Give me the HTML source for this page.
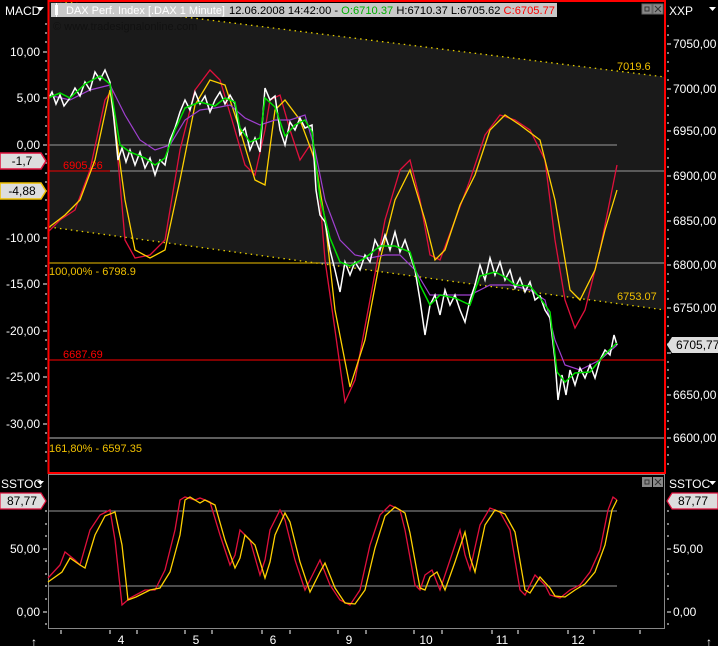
<!DOCTYPE html>
<html><head><meta charset="utf-8"><style>
html,body{margin:0;padding:0;background:#000;width:718px;height:646px;overflow:hidden}
svg{display:block;font-family:"Liberation Sans",sans-serif}
</style></head><body>
<svg width="718" height="646" viewBox="0 0 718 646" xmlns="http://www.w3.org/2000/svg">
<rect width="718" height="646" fill="#000"/>
<polygon points="49,0 665,77 665,310 49,227" fill="#1a1a1a"/>
<line x1="49" y1="0" x2="665" y2="77" stroke="#e8d000" stroke-width="1.3" stroke-dasharray="1.5,4"/>
<line x1="49" y1="227" x2="665" y2="310" stroke="#e8d000" stroke-width="1.3" stroke-dasharray="1.5,4"/>
<line x1="49" y1="145" x2="617" y2="145" stroke="#999" stroke-width="1"/>
<line x1="49" y1="171" x2="665" y2="171" stroke="#999" stroke-width="1"/>
<line x1="49" y1="171" x2="110" y2="171" stroke="#e00" stroke-width="1"/>
<line x1="49" y1="263" x2="665" y2="263" stroke="#aaa" stroke-width="1"/>
<line x1="49" y1="263" x2="320" y2="263" stroke="#f0c000" stroke-width="1"/>
<line x1="49" y1="360" x2="665" y2="360" stroke="#f00" stroke-width="1"/>
<line x1="49" y1="438" x2="665" y2="438" stroke="#bbb" stroke-width="1"/>
<g font-size="11">
<text x="63" y="169" fill="#f00">6905.26</text>
<text x="49" y="275" fill="#f0c000">100,00% - 6798.9</text>
<text x="63" y="358" fill="#f00">6687.69</text>
<text x="49" y="452" fill="#f0c000">161,80% - 6597.35</text>
<text x="617" y="70" fill="#f0c000">7019.6</text>
<text x="617" y="300" fill="#f0c000">6753.07</text>
<text x="53" y="30" fill="#111">© www.tradesignalonline.com</text>
</g>
<polyline fill="none" stroke="#e0103c" stroke-width="1.3" points="48,232 60,220 75,210 90,170 105,100 112,90 118,160 125,240 135,258 150,255 165,240 180,150 195,90 210,70 220,80 232,120 245,165 255,175 265,130 270,100 280,95 290,130 300,160 310,145 318,175 325,260 335,330 345,402 355,380 370,300 385,220 400,170 410,160 420,200 430,255 440,260 455,220 470,180 485,135 500,115 515,120 530,130 545,160 555,240 565,300 575,328 585,310 600,250 610,200 617,165"/>
<polyline fill="none" stroke="#ffd000" stroke-width="1.3" points="48,228 65,215 80,200 95,160 110,90 125,200 135,250 150,258 165,250 180,180 195,105 210,80 225,85 240,130 255,180 265,185 275,110 285,100 300,120 315,160 325,220 335,310 350,387 365,340 380,260 395,200 410,170 425,220 435,260 445,250 460,205 475,175 490,130 505,115 520,125 540,140 555,200 570,290 580,300 595,270 605,230 617,190"/>
<polyline fill="none" stroke="#a040d0" stroke-width="1.2" points="48,95 70,100 90,90 110,85 125,115 140,140 155,150 170,145 185,120 200,110 215,108 230,105 245,118 260,125 275,120 290,120 305,115 315,150 325,200 340,240 355,255 370,258 385,255 400,255 415,270 430,295 450,295 470,295 490,285 510,285 530,290 545,300 555,340 565,365 580,370 600,360 617,345"/>
<polyline fill="none" stroke="#fff" stroke-width="1.5" points="48,100 52,92 56,104 60,95 64,106 70,98 75,88 80,96 85,82 90,90 95,72 100,80 105,70 110,82 114,120 118,160 122,148 126,162 130,150 135,165 140,152 145,168 150,158 155,175 160,160 165,165 170,140 175,128 180,112 185,100 190,110 195,92 200,104 205,96 210,112 215,100 220,92 225,104 230,95 235,104 240,135 245,128 250,150 255,138 260,152 265,88 270,100 275,96 280,130 285,145 290,122 295,130 300,118 305,128 312,125 316,190 320,215 325,222 330,250 335,270 340,292 345,262 350,275 355,262 360,270 365,255 370,262 375,240 380,250 385,235 390,250 395,232 400,252 405,240 410,255 415,270 420,300 425,335 430,305 435,295 440,315 445,290 450,305 455,295 460,310 465,322 470,300 475,285 480,265 485,280 490,258 495,275 500,262 505,280 510,270 515,288 520,278 525,292 530,282 535,300 540,296 545,310 550,318 555,360 558,400 562,375 566,395 570,370 575,385 580,368 585,378 590,365 595,378 600,360 605,350 610,355 614,335 617,345"/>
<polyline fill="none" stroke="#00e000" stroke-width="1.5" points="48,98 60,93 70,98 85,84 100,76 110,84 120,145 130,152 145,158 155,165 165,158 175,130 185,108 200,102 215,106 225,98 235,102 240,128 250,142 260,138 265,98 275,107 285,136 295,125 305,120 312,132 320,198 330,238 340,262 350,266 365,258 380,246 395,246 410,252 420,285 430,305 440,295 455,298 470,305 480,276 495,272 505,277 515,285 530,286 540,298 550,312 557,372 565,382 575,373 590,372 605,354 617,343"/>
<rect x="48.5" y="1" width="616.5" height="472" fill="none" stroke="#f00" stroke-width="2"/>
<rect x="51" y="3" width="506" height="14" fill="#c8c8c8"/>
<rect x="55" y="5" width="3" height="10" fill="#fff"/><line x1="56.5" y1="3" x2="56.5" y2="17" stroke="#fff"/>
<text x="66" y="14" font-size="11" fill="#fff" textLength="159" lengthAdjust="spacingAndGlyphs">DAX Perf. Index [.DAX 1 Minute]</text>
<text x="229" y="14" font-size="11" fill="#000" textLength="326" lengthAdjust="spacingAndGlyphs">12.06.2008 14:42:00 - <tspan fill="#00b000">O:6710.37</tspan> H:6710.37 L:6705.62 <tspan fill="#f00">C:6705.77</tspan></text>
<g fill="none" stroke="#666"><rect x="642" y="4" width="10" height="10" fill="#888"/><rect x="645" y="7" width="4" height="4" stroke="#333"/><rect x="653" y="4" width="10" height="10" fill="#888"/></g>
<path d="M655,6 L661,12 M661,6 L655,12" stroke="#333"/>
<text x="5" y="15" font-size="12" fill="#fff">MACD</text><path d="M37,7 h7 l-3.5,4z" fill="#fff"/>
<g font-size="12" fill="#fff" text-anchor="end">
<text x="40" y="56">10,00</text><text x="40" y="102">5,00</text><text x="40" y="149">0,00</text>
<text x="40" y="242">-10,00</text><text x="40" y="288">-15,00</text><text x="40" y="335">-20,00</text>
<text x="40" y="381">-25,00</text><text x="40" y="428">-30,00</text>
</g>
<g stroke="#fff">
<path d="M43,52h4M43,98h4M43,145h4M43,238h4M43,284h4M43,331h4M43,377h4M43,424h4M43,191h4"/>
<path d="M45,24h2M45,33h2M45,42h2M45,61h2M45,70h2M45,80h2M45,89h2M45,107h2M45,117h2M45,126h2M45,135h2M45,154h2M45,163h2M45,173h2M45,182h2M45,200h2M45,210h2M45,219h2M45,228h2M45,247h2M45,256h2M45,266h2M45,275h2M45,294h2M45,303h2M45,312h2M45,322h2M45,340h2M45,349h2M45,359h2M45,368h2M45,387h2M45,396h2M45,405h2M45,415h2M45,433h2M45,443h2M45,452h2M45,461h2"/>
</g>
<path d="M0,153h41l5,8l-5,8h-41z" fill="#ddd" stroke="#e0103c" stroke-width="1.5"/>
<text x="22" y="165" font-size="12" fill="#000" text-anchor="middle">-1,7</text>
<path d="M0,183h41l5,8l-5,8h-41z" fill="#ddd" stroke="#f0c000" stroke-width="1.5"/>
<text x="22" y="195" font-size="12" fill="#000" text-anchor="middle">-4,88</text>
<text x="669" y="15" font-size="12" fill="#fff">XXP</text><path d="M709,7 h7 l-3.5,4z" fill="#fff"/>
<g font-size="12" fill="#fff">
<text x="673" y="48">7050,00</text><text x="673" y="93">7000,00</text><text x="673" y="135">6950,00</text>
<text x="673" y="180">6900,00</text><text x="673" y="225">6850,00</text><text x="673" y="269">6800,00</text>
<text x="673" y="312">6750,00</text><text x="673" y="399">6650,00</text><text x="673" y="442">6600,00</text>
</g>
<g stroke="#fff"><path d="M667,44h4M667,89h4M667,131h4M667,176h4M667,221h4M667,265h4M667,308h4M667,353h4M667,395h4M667,438h4"/>
<path d="M667,26h2M667,35h2M667,53h2M667,62h2M667,71h2M667,80h2M667,98h2M667,106h2M667,115h2M667,123h2M667,140h2M667,149h2M667,158h2M667,167h2M667,185h2M667,194h2M667,203h2M667,212h2M667,230h2M667,239h2M667,248h2M667,256h2M667,274h2M667,282h2M667,291h2M667,299h2M667,317h2M667,326h2M667,335h2M667,344h2M667,362h2M667,370h2M667,378h2M667,387h2M667,404h2M667,412h2M667,421h2M667,429h2M667,447h2M667,455h2M667,464h2"/></g>
<path d="M718,337h-46l-5,8l5,8h46z" fill="#ddd"/>
<text x="676" y="349" font-size="12" fill="#000">6705,77</text>
<rect x="48.5" y="474.5" width="616" height="154" fill="none" stroke="#888" stroke-width="1"/>
<line x1="49" y1="511" x2="617" y2="511" stroke="#999"/>
<line x1="49" y1="586" x2="617" y2="586" stroke="#999"/>
<g fill="#888"><rect x="642" y="477" width="10" height="10"/><rect x="653" y="477" width="10" height="10"/></g>
<rect x="645" y="480" width="4" height="4" fill="none" stroke="#333"/>
<path d="M655,479 L661,485 M661,479 L655,485" stroke="#333"/>
<polyline fill="none" stroke="#e0103c" stroke-width="1.3" points="48,578 60,565 65,552 75,560 80,565 90,530 100,515 110,510 115,540 122,605 130,598 145,590 155,590 165,570 175,530 180,500 185,497 195,500 200,498 210,502 220,535 230,565 235,555 240,530 250,540 260,575 265,560 270,530 280,510 285,520 295,560 305,590 315,570 320,560 330,585 340,600 350,605 360,590 370,545 380,515 390,505 400,510 405,530 415,585 420,590 425,575 432,570 440,590 450,560 460,530 465,555 470,570 480,525 490,508 500,512 510,530 520,590 525,595 535,575 545,585 550,595 560,598 570,590 580,585 590,572 600,550 608,510 613,497 617,500"/>
<polyline fill="none" stroke="#ffd000" stroke-width="1.3" points="48,582 62,572 70,558 80,565 85,568 95,535 105,516 115,512 122,545 128,600 136,597 150,590 160,588 170,572 180,535 185,500 190,497 200,503 205,500 215,505 225,540 235,568 240,558 245,535 255,545 265,578 270,562 275,535 285,513 290,522 300,562 310,592 320,572 325,563 335,588 345,603 355,604 365,590 375,548 385,516 395,507 405,513 410,533 420,588 425,590 430,577 437,572 445,590 455,562 465,532 470,557 475,572 485,525 495,510 505,514 515,532 525,590 530,593 540,577 550,588 555,596 565,597 575,590 585,584 595,572 605,545 612,510 617,500"/>
<text x="1" y="488" font-size="12" fill="#fff">SSTOC</text><path d="M37,481 h7 l-3.5,4z" fill="#fff"/>
<text x="669" y="488" font-size="12" fill="#fff">SSTOC</text><path d="M709,481 h7 l-3.5,4z" fill="#fff"/>
<path d="M0,493h41l5,8l-5,8h-41z" fill="#ddd" stroke="#e0103c" stroke-width="1.2"/>
<text x="22" y="505" font-size="12" fill="#000" text-anchor="middle">87,77</text>
<path d="M718,493h-46l-5,8l5,8h46z" fill="#ddd" stroke="#e0103c" stroke-width="1.2"/>
<text x="678" y="505" font-size="12" fill="#000">87,77</text>
<g font-size="12" fill="#fff">
<text x="40" y="553" text-anchor="end">50,00</text><text x="40" y="616" text-anchor="end">0,00</text>
<text x="673" y="553">50,00</text><text x="673" y="616">0,00</text>
</g>
<g stroke="#fff"><path d="M43,549h4M43,612h4M667,549h4M667,612h4M45,511h2M45,524h2M45,536h2M45,561h2M45,574h2M45,586h2M45,599h2M45,624h2M667,511h2M667,524h2M667,536h2M667,561h2M667,574h2M667,586h2M667,599h2M667,624h2"/>
<path d="M61,630v4M110,630v4M137,630v4M185,630v4M212,630v4M262,630v4M290,630v4M338,630v4M366,630v4M414,630v4M442,630v4M492,630v4M518,630v4M568,630v4M594,630v4M640,630v4"/></g>
<g font-size="12" fill="#fff" text-anchor="middle">
<text x="121" y="644">4</text><text x="196" y="644">5</text><text x="273" y="644">6</text><text x="349" y="644">9</text>
<text x="426" y="644">10</text><text x="502" y="644">11</text><text x="578" y="644">12</text>
<text x="34" y="646">↑</text><text x="709" y="646">↑</text>
</g>
</svg>
</body></html>
